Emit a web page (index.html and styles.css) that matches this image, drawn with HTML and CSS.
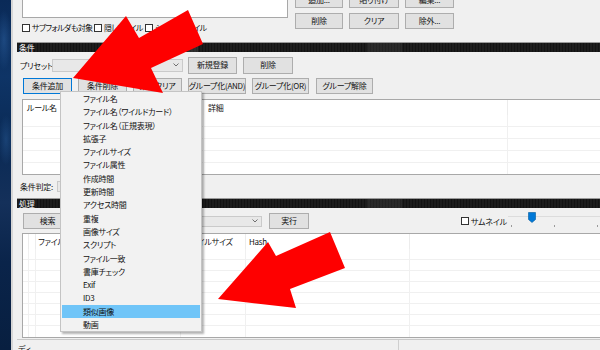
FILE: index.html
```html
<!DOCTYPE html>
<html lang="ja">
<head>
<meta charset="utf-8">
<title>条件</title>
<link rel="stylesheet" href="styles.css">
</head>
<body>
<div class="desktop"></div>
<div class="window">
  <div class="top">
    <div class="top-left">
      <div class="filelist"></div>
      <div class="checks">
        <div class="chk chk1"><span class="box"></span>サブフォルダも対象</div>
        <div class="chk chk2"><span class="box"></span>隠しファイル</div>
        <div class="chk"><span class="box"></span>システムファイル</div>
      </div>
    </div>
    <div class="top-btns">
      <div class="btn">追加...</div>
      <div class="btn">貼り付け</div>
      <div class="btn">編集...</div>
      <div class="btn">削除</div>
      <div class="btn">クリア</div>
      <div class="btn">除外...</div>
    </div>
  </div>

  <div class="bar">条件</div>

  <div class="preset-row">
    <span class="lbl">プリセット:</span>
    <div class="combo w131"><svg class="chev" width="6" height="4" viewBox="0 0 6 4"><polyline points="0.5,0.5 3,3 5.5,0.5" fill="none" stroke="#707070" stroke-width="1"/></svg></div>
    <div class="btn b-new">新規登録</div>
    <div class="btn b-del">削除</div>
  </div>

  <div class="cond-row">
    <div class="btn w49 focus">条件追加</div>
    <div class="btn w49">条件削除</div>
    <div class="btn w49">条件クリア</div>
    <div class="btn w58">グループ化(AND)</div>
    <div class="btn w57">グループ化(OR)</div>
    <div class="btn w57 ml1">グループ解除</div>
  </div>

  <div class="listview rule-list">
    <div class="lv-head rule-cols"><div>ルール名</div><div>詳細</div><div></div></div>
    <div class="lv-row rule-cols"><div></div><div></div><div></div></div>
    <div class="lv-row rule-cols"><div></div><div></div><div></div></div>
    <div class="lv-row rule-cols"><div></div><div></div><div></div></div>
    <div class="lv-row rule-cols"><div></div><div></div><div></div></div>
    <div class="lv-row rule-cols last"><div></div><div></div><div></div></div>
  </div>

  <div class="judge-row">
    <span class="lbl2">条件判定:</span>
    <div class="combo w73"></div>
  </div>

  <div class="bar bar2">処理</div>

  <div class="search-row">
    <div class="btn w49 h16">検索</div>
    <div class="combo w184"><svg class="chev" width="6" height="4" viewBox="0 0 6 4"><polyline points="0.5,0.5 3,3 5.5,0.5" fill="none" stroke="#707070" stroke-width="1"/></svg></div>
    <div class="btn w40 h16 b-run">実行</div>
    <div class="chk thumbchk"><span class="box"></span>サムネイル</div>
    <div class="slider">
      <div class="track"></div>
      <svg class="thumb" width="8" height="11" viewBox="0 0 8 11"><path d="M0.5 0.5H7.5V7.5L4 10.5L0.5 7.5Z" fill="#0078d7" stroke="#005a9e" stroke-width="0.6"/></svg>
      <span class="tick t1"></span><span class="tick t2"></span><span class="tick t3"></span>
    </div>
  </div>

  <div class="listview result-list">
    <div class="lv-head res-cols"><div></div><div></div><div class="c3">ファイル名</div><div class="c4">ファイルサイズ</div><div class="c5">Hash</div><div></div></div>
    <div class="lv-row res-cols"><div></div><div></div><div></div><div></div><div></div><div></div></div>
    <div class="lv-row res-cols"><div></div><div></div><div></div><div></div><div></div><div></div></div>
    <div class="lv-row res-cols"><div></div><div></div><div></div><div></div><div></div><div></div></div>
    <div class="lv-row res-cols"><div></div><div></div><div></div><div></div><div></div><div></div></div>
    <div class="lv-row res-cols"><div></div><div></div><div></div><div></div><div></div><div></div></div>
    <div class="lv-row res-cols"><div></div><div></div><div></div><div></div><div></div><div></div></div>
    <div class="lv-row res-cols"><div></div><div></div><div></div><div></div><div></div><div></div></div>
    <div class="lv-row res-cols"><div></div><div></div><div></div><div></div><div></div><div></div></div>
  </div>

  <div class="status">
    <div class="st1">ディ</div>
    <div class="st2"></div>
  </div>
</div>

<div class="menu">
  <div class="mi">ファイル名</div>
  <div class="mi">ファイル名（ワイルドカード）</div>
  <div class="mi">ファイル名（正規表現）</div>
  <div class="mi">拡張子</div>
  <div class="mi">ファイルサイズ</div>
  <div class="mi">ファイル属性</div>
  <div class="mi">作成時間</div>
  <div class="mi">更新時間</div>
  <div class="mi">アクセス時間</div>
  <div class="mi">重複</div>
  <div class="mi">画像サイズ</div>
  <div class="mi">スクリプト</div>
  <div class="mi">ファイル一致</div>
  <div class="mi">書庫チェック</div>
  <div class="mi">Exif</div>
  <div class="mi">ID3</div>
  <div class="mi sel">類似画像</div>
  <div class="mi">動画</div>
</div>

<svg class="arrows" width="600" height="350" viewBox="0 0 600 350">
  <polygon points="73,78 126,16 139,38 188,10 203,44 151,68 163,93" fill="#fe0000"/>
  <polygon points="218,299 268,242 276,256 330,232 345,268 290,289 296,308" fill="#fe0000"/>
</svg>
</body>
</html>
```

FILE: styles.css
```css
* { box-sizing: border-box; }

body {
  margin: 0;
  width: 600px;
  height: 350px;
  overflow: hidden;
  display: flex;
  position: relative;
  font-family: "Noto Sans CJK JP", "Noto Sans", sans-serif;
  font-size: 8px;
  font-feature-settings: "palt";
  letter-spacing: -0.25px;
  color: #111;
  background: #0c2547;
}

.desktop {
  width: 11px;
  flex: none;
  background:
    radial-gradient(ellipse 8px 30px at 4px 40px, rgba(60,120,190,.35), transparent),
    radial-gradient(ellipse 8px 25px at 6px 140px, rgba(60,120,190,.3), transparent),
    linear-gradient(180deg, #0a2a58 0%, #0e3466 22%, #0a2a55 40%, #14305a 58%, #0a244a 75%, #081f40 100%);
}

.window {
  flex: 1;
  min-width: 0;
  background: #f0f0f0;
  border-left: 2px solid #d6d6d6;
  padding-left: 4px;
  overflow: hidden;
  display: flex;
  flex-direction: column;
}

/* top area */
.top {
  display: flex;
  flex: none;
  height: 48px;
  margin-top: -8px;
  padding-left: 5px;
}
.top-left { width: 266px; display: flex; flex-direction: column; }
.filelist { height: 26px; background: #fff; border: 1px solid #a8a8a8; }
.checks { display: flex; align-items: center; height: 9px; margin-top: 5px; letter-spacing: -0.6px; }
.chk { display: flex; align-items: center; gap: 2px; white-space: nowrap; line-height: 9px; }
.chk1 { width: 72px; }
.chk2 { width: 51px; }
.box { width: 8px; height: 8px; border: 1px solid #333; background: #fff; flex: none; }

.top-btns {
  margin-left: 7px;
  display: grid;
  grid-template-columns: 48px 50px 49px;
  grid-auto-rows: 16px;
  column-gap: 6px;
  row-gap: 5px;
}

.btn {
  display: flex;
  align-items: center;
  justify-content: center;
  background: #e1e1e1;
  border: 1px solid #adadad;
  white-space: nowrap;
  flex: none;
  line-height: 1;
}
.focus { border-color: #0078d7; }

/* section bars */
.bar {
  flex: none;
  height: 10px;
  margin-top: 2px;
  padding-left: 2px;
  color: #fff;
  line-height: 10px;
  background:
    linear-gradient(90deg, transparent 0 28%, rgba(80,80,80,.35) 28% 31%, transparent 31% 60%, rgba(70,70,70,.3) 60% 66%, transparent 66%),
    repeating-linear-gradient(90deg, #1d1d1d 0 2px, #131313 2px 3px);
  border-top: 1px solid #9a9a9a;
}
.bar2 { margin-top: 6px; }

/* preset row */
.preset-row {
  display: flex;
  align-items: center;
  flex: none;
  height: 18px;
  margin-top: 4px;
  padding-left: 3px;
}
.lbl { width: 32px; white-space: nowrap; }
.combo {
  flex: none;
  height: 13px;
  background: #e8e8e8;
  border: 1px solid #cacaca;
  display: flex;
  align-items: center;
  justify-content: flex-end;
  padding-right: 3px;
}
.w131 { width: 131px; }
.w73 { width: 73px; height: 11px; }
.w184 { width: 184px; height: 11px; margin-left: 6px; }
.preset-row .btn { height: 17px; }
.b-new { margin-left: 5px; width: 49px; }
.b-del { margin-left: 6px; width: 50px; }

/* condition buttons */
.cond-row {
  display: flex;
  flex: none;
  height: 16px;
  margin-top: 4px;
  padding-left: 6px;
  gap: 6px;
}
.w49 { width: 49px; }
.w58 { width: 58px; }
.w57 { width: 57px; }
.w40 { width: 40px; }
.h16 { height: 16px; }
.ml1 { margin-left: 1px; }

/* list views */
.listview {
  flex: none;
  margin-left: 5px;
  margin-right: -3px;
  background: #fff;
  border: 1px solid #a8a8a8;
  display: flex;
  flex-direction: column;
  overflow: hidden;
}
.rule-list { margin-top: 5px; height: 76px; }
.rule-cols { display: grid; grid-template-columns: 181px 304px 1fr; }
.lv-head { height: 15px; line-height: 15px; flex: none; }
.lv-head > div { border-right: 1px solid #ececec; white-space: nowrap; overflow: hidden; }
.rule-list .lv-head > div { padding-left: 4px; }
.lv-row { height: 12px; flex: none; border-bottom: 1px solid #f0f0f0; }
.lv-row > div { border-right: 1px solid #f0f0f0; }
.lv-row.last { border-bottom: none; }

/* judge row */
.judge-row {
  display: flex;
  align-items: center;
  flex: none;
  height: 11px;
  margin-top: 6px;
  padding-left: 3px;
}
.lbl2 { width: 37px; white-space: nowrap; }

/* search row */
.search-row {
  display: flex;
  align-items: center;
  flex: none;
  height: 16px;
  margin-top: 5px;
  padding-left: 6px;
}
.b-run { margin-left: 7px; }
.thumbchk { margin-left: 152px; width: 47px; }
.slider { position: relative; flex: 1; height: 16px; }
.track { margin-top: 3px; height: 1px; background: #dcdcdc; }
.thumb { position: absolute; left: 20px; top: -1px; }
.tick { position: absolute; top: 12px; width: 1px; height: 2px; background: #9a9a9a; }
.t1 { left: 3px; }
.t2 { left: 46px; }
.t3 { left: 89px; }

.result-list { margin-top: 4px; height: 105px; }
.res-cols { display: grid; grid-template-columns: 6px 7px 145px 65px 164px 1fr; }
.result-list .lv-row { height: 11px; }
.result-list .lv-row:last-child { border-bottom: none; }
.lv-head .c3 { padding-left: 2px; }
.lv-head .c4 { padding-left: 4px; }
.lv-head .c5 { padding-left: 3px; }

/* status */
.status {
  flex: none;
  display: flex;
  height: 12px;
  margin-top: 1px;
  border-top: 1px solid #c9c9c9;
}
.st1 {
  width: 382px;
  border-right: 1px solid #cfcfcf;
  padding-left: 1px;
  padding-top: 4px;
  line-height: 10px;
  white-space: nowrap;
}
.st2 { flex: 1; }

/* popup menu */
.menu {
  position: absolute;
  left: 60px;
  top: 91px;
  width: 142px;
  background: #f2f2f2;
  border: 1px solid #c4c4c4;
  box-shadow: 2px 2px 2px rgba(0,0,0,.3);
}
.mi {
  height: 13.3px;
  line-height: 13.3px;
  padding-left: 21px;
  white-space: nowrap;
  margin: 0 1px;
}
.mi.sel { background: #70c5f8; }

.arrows {
  position: absolute;
  left: 0;
  top: 0;
  pointer-events: none;
}
```
